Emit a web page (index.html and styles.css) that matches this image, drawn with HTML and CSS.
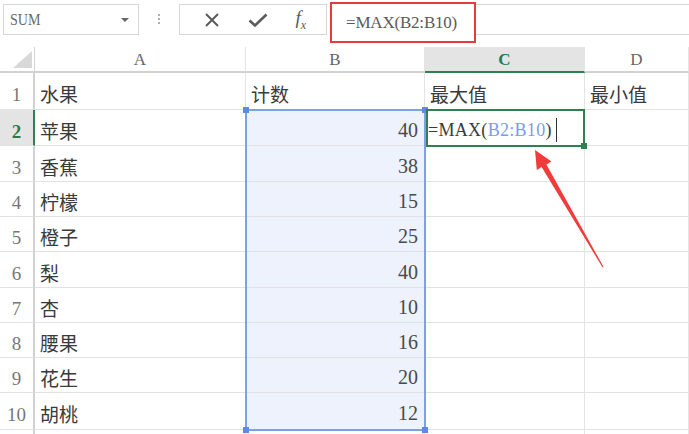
FILE: index.html
```html
<!DOCTYPE html>
<html lang="zh-CN">
<head>
  <meta charset="UTF-8">
  <title>MAX 函数</title>
  <link rel="stylesheet" href="styles.css">
</head>
<body>
  <div class="screen">
    <!-- Toolbar -->
    <div class="toolbar">
      <div class="name-box">
        <span class="name-text">SUM</span>
        <span class="drop-arrow"></span>
      </div>
      <div class="grip"><i></i><i></i><i></i></div>
      <div class="fx-buttons">
        <svg class="tool-icon" width="16" height="16" viewBox="0 0 16 16">
          <path d="M2 2 L14 14 M14 2 L2 14" stroke="#5a5a5a" stroke-width="2" fill="none"/>
        </svg>
        <svg class="tool-icon" width="20" height="16" viewBox="0 0 20 16">
          <path d="M1.5 8.5 L7 13.5 L18.5 2.5" stroke="#5a5a5a" stroke-width="2.6" fill="none"/>
        </svg>
        <span class="fx-label"><i>f</i><sub>x</sub></span>
      </div>
      <div class="formula-bar">
        <div class="formula-mark">=MAX(B2:B10)</div>
        <div class="formula-rest"></div>
      </div>
    </div>

    <!-- Sheet -->
    <div class="sheet">
      <div class="corner"><span class="corner-tri"></span></div>
      <div class="col-head">A</div>
      <div class="col-head">B</div>
      <div class="col-head active">C</div>
      <div class="col-head">D</div>

      <div class="row-head">1</div>
      <div class="cell">水果</div>
      <div class="cell">计数</div>
      <div class="cell">最大值</div>
      <div class="cell">最小值</div>

      <div class="row-head active">2</div>
      <div class="cell">苹果</div>
      <div class="cell num sel">40</div>
      <div class="cell edit">=MAX(<span class="ref">B2:B10</span>)<span class="caret"></span></div>
      <div class="cell"></div>

      <div class="row-head">3</div>
      <div class="cell">香蕉</div>
      <div class="cell num sel">38</div>
      <div class="cell"></div>
      <div class="cell"></div>

      <div class="row-head">4</div>
      <div class="cell">柠檬</div>
      <div class="cell num sel">15</div>
      <div class="cell"></div>
      <div class="cell"></div>

      <div class="row-head">5</div>
      <div class="cell">橙子</div>
      <div class="cell num sel">25</div>
      <div class="cell"></div>
      <div class="cell"></div>

      <div class="row-head">6</div>
      <div class="cell">梨</div>
      <div class="cell num sel">40</div>
      <div class="cell"></div>
      <div class="cell"></div>

      <div class="row-head">7</div>
      <div class="cell">杏</div>
      <div class="cell num sel">10</div>
      <div class="cell"></div>
      <div class="cell"></div>

      <div class="row-head">8</div>
      <div class="cell">腰果</div>
      <div class="cell num sel">16</div>
      <div class="cell"></div>
      <div class="cell"></div>

      <div class="row-head">9</div>
      <div class="cell">花生</div>
      <div class="cell num sel">20</div>
      <div class="cell"></div>
      <div class="cell"></div>

      <div class="row-head">10</div>
      <div class="cell">胡桃</div>
      <div class="cell num sel">12</div>
      <div class="cell"></div>
      <div class="cell"></div>

      <div class="row-head"></div>
      <div class="cell"></div>
      <div class="cell"></div>
      <div class="cell"></div>
      <div class="cell"></div>

      <!-- selection range B2:B10 and active cell C2 -->
      <div class="range-box">
        <span class="dot tl"></span><span class="dot tr"></span>
        <span class="dot bl"></span><span class="dot br"></span>
      </div>
      <div class="active-box"><span class="dot br green"></span></div>
    </div>

    <!-- Annotation arrow -->
    <svg class="arrow" width="689" height="434" viewBox="0 0 689 434">
      <polygon points="535,150 551.5,161.5 546.4,164.4 603.5,266.8 602.5,267.3 541.6,167.1 536.8,170" fill="#f23b3b"/>
    </svg>
  </div>
</body>
</html>
```

FILE: styles.css
```css
/* Reset */
* {
  box-sizing: border-box;
  margin: 0;
  padding: 0;
}
body {
  background-color: #fff;
  font-family: "Liberation Serif", "Noto Sans CJK SC", serif;
  color: #3a3a3a;
  overflow: hidden;
}
.screen {
  position: relative;
  width: 689px;
  height: 434px;
  overflow: hidden;
}

/* Toolbar */
.toolbar {
  display: flex;
  align-items: flex-start;
  height: 47px;
}
.name-box {
  display: flex;
  align-items: center;
  justify-content: space-between;
  width: 136px;
  height: 31px;
  margin: 4px 0 0 3px;
  padding: 0 9px 0 6px;
  border: 1px solid #d6d6d6;
}
.name-text {
  font-family: "Liberation Serif", serif;
  font-size: 16px;
  color: #6a6a6a;
  transform: scaleX(0.88);
  transform-origin: left center;
}
.drop-arrow {
  width: 0;
  height: 0;
  border-left: 4px solid transparent;
  border-right: 4px solid transparent;
  border-top: 4px solid #666;
}
.grip {
  display: flex;
  flex-direction: column;
  align-items: center;
  gap: 2px;
  width: 40px;
  padding-top: 14px;
}
.grip i {
  width: 2px;
  height: 2px;
  background-color: #b0b0b0;
}
.fx-buttons {
  display: flex;
  align-items: center;
  justify-content: space-around;
  width: 148px;
  height: 31px;
  margin-top: 4px;
  padding: 0 6px 0 10px;
  border: 1px solid #d6d6d6;
}
.fx-label {
  font-family: "Liberation Serif", serif;
  font-size: 19px;
  color: #5a5a5a;
  line-height: 1;
}
.fx-label sub {
  font-size: 12px;
  font-style: italic;
}
.formula-bar {
  display: flex;
  flex: 1;
  align-items: flex-start;
  margin-left: 3px;
}
.formula-mark {
  width: 146px;
  height: 41px;
  margin-top: 2px;
  padding: 9px 0 0 14px;
  border: 2px solid #e8393e;
  font-size: 17px;
  color: #5a5a5a;
  letter-spacing: -0.2px;
}
.formula-rest {
  flex: 1;
  height: 31px;
  margin-top: 4px;
  border-top: 1px solid #d6d6d6;
  border-bottom: 1px solid #d6d6d6;
}

/* Sheet grid */
.sheet {
  position: relative;
  display: grid;
  grid-template-columns: 35px 211px 179px 160px 1fr;
  grid-template-rows: 26px 37px 36px 36px 35px 35px 36px 35px 35px 35px 37px 30px;
}
.corner {
  position: relative;
  border-right: 1px solid #d2d2d2;
  border-bottom: 2px solid #d2d2d2;
}
.corner-tri {
  position: absolute;
  left: 13px;
  bottom: 3px;
  width: 19px;
  height: 17px;
  background-color: #d8d8d8;
  clip-path: polygon(100% 0, 100% 100%, 0 100%);
}
.col-head {
  display: flex;
  align-items: center;
  justify-content: center;
  padding-top: 2px;
  font-size: 17px;
  color: #666;
  border-right: 1px solid #e4e4e4;
  border-bottom: 2px solid #d2d2d2;
}
.col-head.active {
  background-color: #e4e4e4;
  color: #2b7a4b;
  font-weight: bold;
  border-bottom: 2px solid #2e8050;
}
.row-head {
  display: flex;
  align-items: center;
  justify-content: center;
  padding-top: 8px;
  font-size: 19px;
  color: #777;
  border-right: 2px solid #d2d2d2;
  border-bottom: 1px solid #e2e2e2;
}
.row-head.active {
  background-color: #e4e4e4;
  color: #2b7a4b;
  font-weight: bold;
  border-right: 2px solid #2e8050;
}
.cell {
  display: flex;
  align-items: center;
  padding: 5px 5px 0 5px;
  font-family: "Noto Sans CJK SC", sans-serif;
  font-size: 19px;
  color: #3a3a3a;
  border-right: 1px solid #e4e4e4;
  border-bottom: 1px solid #e2e2e2;
  white-space: nowrap;
}
.cell.num {
  justify-content: flex-end;
  font-family: "Liberation Serif", serif;
  font-size: 20px;
  color: #4a4a4a;
  padding-right: 6px;
}
.cell.sel {
  background-color: #edf2fd;
}
.cell.edit {
  padding-left: 3px;
  font-family: "Liberation Serif", serif;
  font-size: 18px;
  color: #3a3a3a;
  letter-spacing: 0.3px;
}
.ref {
  color: #7d9be8;
}
.caret {
  display: inline-block;
  width: 1px;
  height: 24px;
  margin-left: 4px;
  background-color: #333;
}

/* Overlays over the grid (absolute, so they skip auto placement) */
.range-box {
  position: absolute;
  grid-column: 3 / 4;
  grid-row: 3 / 12;
  inset: -1px -1px -1px -1px;
  border: 2px solid #7ba0ef;
  pointer-events: none;
}
.active-box {
  position: absolute;
  grid-column: 4 / 5;
  grid-row: 3 / 4;
  inset: -1px 0 -1px 1px;
  border: 2px solid #2e8050;
  pointer-events: none;
}
.dot {
  position: absolute;
  width: 6px;
  height: 6px;
  background-color: #5f88ea;
}
.dot.green {
  background-color: #2e8050;
}
.dot.tl { left: -4px; top: -4px; }
.dot.tr { right: -4px; top: -4px; }
.dot.bl { left: -4px; bottom: -4px; }
.dot.br { right: -4px; bottom: -4px; }

/* Arrow */
.arrow {
  position: absolute;
  left: 0;
  top: 0;
  pointer-events: none;
}
```
